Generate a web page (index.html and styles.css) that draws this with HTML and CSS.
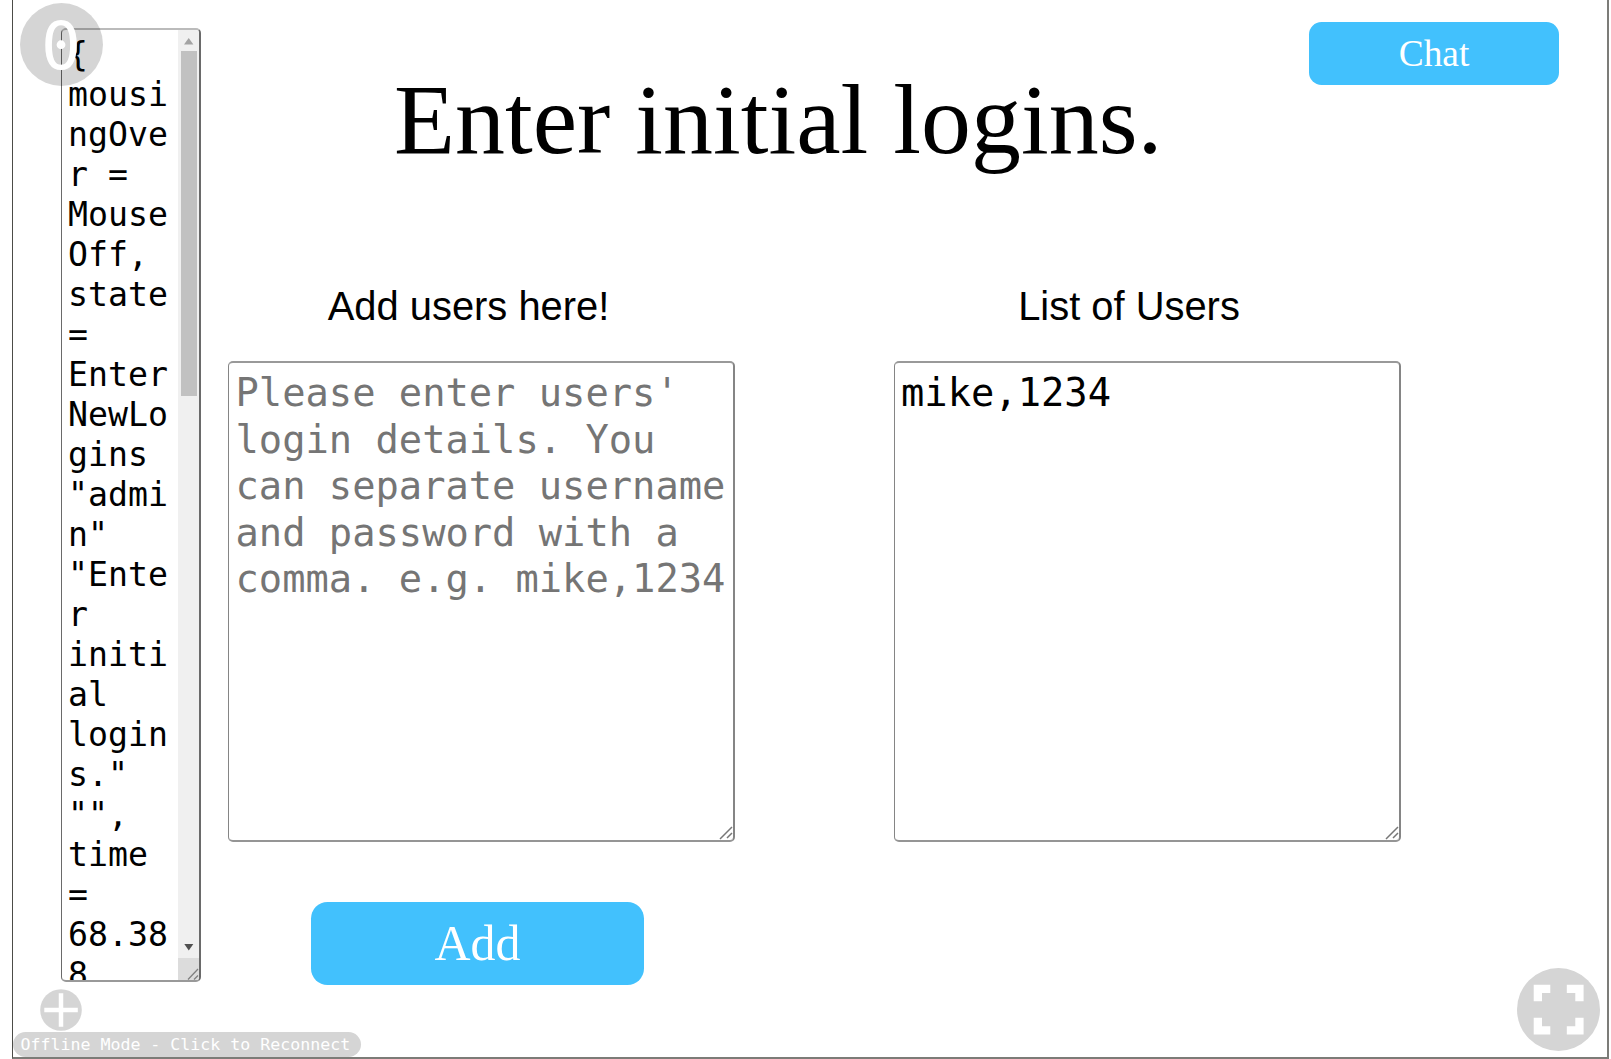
FILE: index.html
```html
<!DOCTYPE html>
<html lang="en">
<head>
<meta charset="utf-8">
<title>Enter initial logins</title>
<link rel="stylesheet" href="styles.css">
</head>
<body>
<div class="stage">
  <aside class="debug">
    <div class="debug-text">{<br>mousi<br>ngOve<br>r =<br>Mouse<br>Off,<br>state<br>=<br>Enter<br>NewLo<br>gins<br>"admi<br>n"<br>"Ente<br>r<br>initi<br>al<br>login<br>s."<br>"",<br>time<br>=<br>68.38<br>8</div>
    <div class="scrollbar">
      <svg class="arrow" width="21" height="21"><path d="M6 14.500 10.700 8l4.700 6.500z" fill="#a3a3a3"/></svg>
      <div class="thumb"></div>
      <svg class="arrow" width="21" height="22"><path d="M6.300 8h9l-4.500 6.500z" fill="#505050"/></svg>
      <svg class="corner" width="21" height="22"><path d="M10 21.500 20 11M16 21.500 20 17.500" stroke="#808080" stroke-width="1.300" fill="none"/></svg>
    </div>
  </aside>
  <main class="content">
    <header class="top">
      <h1 class="title">Enter initial logins.</h1>
      <div class="button chat">Chat</div>
    </header>
    <div class="columns">
      <section class="column">
        <h2 class="label">Add users here!</h2>
        <div class="area placeholder">Please enter users'<br>login details. You<br>can separate username<br>and password with a<br>comma. e.g. mike,1234<svg class="grip" width="14" height="14"><path d="M1 13 13 1M8 12 13 7" stroke="#777" stroke-width="1.500" fill="none"/></svg></div>
        <div class="button add">Add</div>
      </section>
      <section class="column">
        <h2 class="label list-label">List of Users</h2>
        <div class="area list">mike,1234<svg class="grip" width="14" height="14"><path d="M1 13 13 1M8 12 13 7" stroke="#777" stroke-width="1.500" fill="none"/></svg></div>
      </section>
    </div>
  </main>
  <div class="counter">0</div>
  <svg class="plus" width="42" height="42"><circle cx="21" cy="21" r="20.800" fill="#d5d5d5"/><path d="M21 4.300v33.500M4.300 21h33.500" stroke="#fff" stroke-width="4.500"/></svg>
  <div class="offline">Offline Mode - Click to Reconnect</div>
  <svg class="fullscreen" width="83" height="83"><circle cx="41.500" cy="41.500" r="41.500" fill="#d5d5d5"/><path d="M16.700 16.700h16.600V25H25v8.300h-8.300zM49.800 16.700h16.800v16.600h-8.300V25h-8.500zM66.600 49.800v16.800H49.800v-8.300h8.500v-8.500zM33.300 66.600H16.700V49.800H25v8.500h8.300z" fill="#fff"/></svg>
</div>
</body>
</html>
```
FILE: styles.css
```css
* { box-sizing: border-box; }
body { margin: 0; background: #fff; color: #000; overflow: hidden; }

.stage {
  position: relative;
  display: flex;
  align-items: flex-start;
  width: 1597px;
  height: 1059px;
  margin-left: 12px;
  padding-left: 48px;
  border: 2px solid #7c7c78;
  border-top: 0;
  border-left: 1px solid #4c4c48;
}

.debug {
  display: flex;
  justify-content: space-between;
  width: 140px;
  height: 954px;
  margin-top: 28px;
  overflow: hidden;
  border: 2px solid #6a6a6a;
  border-left-width: 1px;
  border-top-color: #bbb;
  border-bottom-color: #999;
  border-radius: 5px;
}
.debug-text {
  padding: 5px 0 0 6px;
  font: 33.2px/40px "DejaVu Sans Mono", monospace;
  white-space: nowrap;
}
.scrollbar {
  display: flex;
  flex-direction: column;
  flex: none;
  width: 21px;
  background: #f0f0f0;
}
.arrow { display: block; flex: none; }
.thumb { width: 16px; height: 345px; margin: 0 auto auto 3px; background: #c1c1c1; }
.corner { display: block; flex: none; background: #dcdcdc; }

.content { width: 1406px; }
.top { display: flex; align-items: flex-start; height: 270px; }
.title {
  width: 915px;
  margin: 62px 0 0 193px;
  font: 99.9px/115px "Liberation Serif", serif;
  white-space: nowrap;
}
.button {
  display: flex;
  align-items: center;
  justify-content: center;
  color: #fff;
  background: #42c1fd;
  font-family: "Liberation Serif", serif;
}
.chat { width: 250px; height: 62.5px; margin-top: 22px; border-radius: 12.5px; font-size: 37.4px; }

.columns { display: flex; gap: 159px; margin-left: 27px; }
.column { width: 507px; }
.label {
  height: 91px;
  margin: 0;
  padding: 13px 26px 0 0;
  font: 39.9px/46px "Liberation Sans", sans-serif;
  text-align: center;
}
.list-label { padding-right: 37px; }
.area {
  position: relative;
  height: 481px;
  padding: 7px 0 0 6.500px;
  border: 2px solid #858585;
  border-top-color: #999;
  border-bottom-color: #959595;
  border-left-width: 1px;
  border-radius: 5px;
  font: 38.75px/46.6px "DejaVu Sans Mono", monospace;
  white-space: nowrap;
}
.placeholder { color: #757575; }
.list { padding-left: 6px; }
.grip { position: absolute; right: 0; bottom: 0; }
.add { width: 333px; height: 83px; margin: 60px 0 0 83px; border-radius: 16.5px; font-size: 49.9px; }

/* Floating controls over the canvas */
.counter {
  position: absolute;
  left: 6.500px;
  top: 3px;
  width: 83px;
  height: 83px;
  border-radius: 50%;
  background: rgba(0, 0, 0, 0.165);
  color: #fff;
  font: 66.5px/86px "DejaVu Sans Mono", monospace;
  text-align: center;
}
.plus { position: absolute; left: 27px; top: 989px; }
.offline {
  position: absolute;
  left: 0;
  top: 1032px;
  width: 348px;
  height: 25px;
  padding-left: 7.500px;
  border-radius: 12.5px;
  background: #d5d5d5;
  color: #fff;
  font: 16.6px/25px "DejaVu Sans Mono", monospace;
  white-space: nowrap;
}
.fullscreen { position: absolute; left: 1504px; top: 968px; }
```
